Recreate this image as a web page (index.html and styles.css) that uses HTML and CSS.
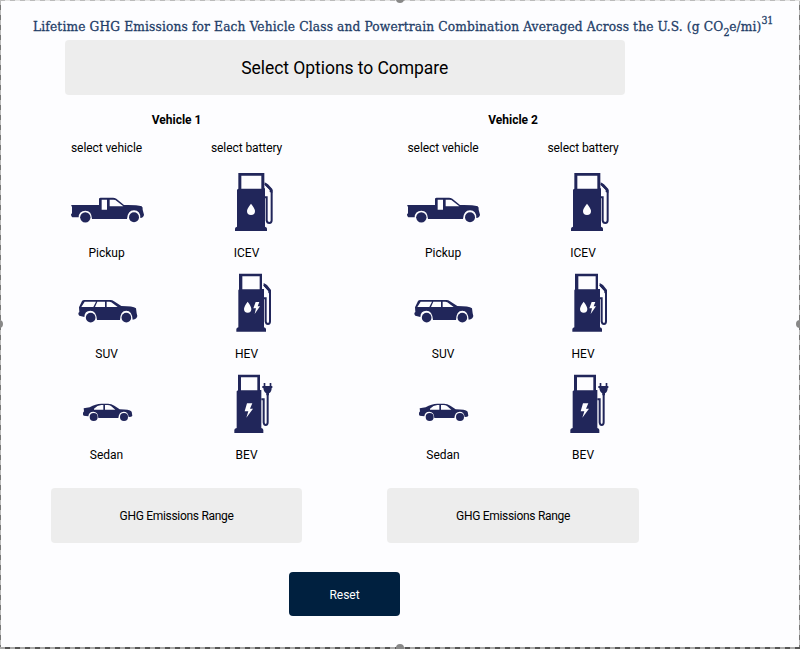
FILE: index.html
```
<!DOCTYPE html>
<html lang="en">
<head>
<meta charset="utf-8">
<title>Lifetime GHG Emissions</title>
<link rel="stylesheet" href="styles.css">
</head>
<body>
<svg class="defs" aria-hidden="true">
  <symbol id="pickup" viewBox="-12 0 300 225">
    <path fill-rule="evenodd" d="M31 120H114V102Q114 98 119 98H156Q161 98 166 101L189 120Q226 119 242 124Q246 126 245 134L249 149Q248 157 238 159Q238 136 219 136Q200 136 198 162H93Q92 137 73 137Q54 137 53 157H34Q30 156 30 148L33 145V125L31 123ZM122 104V134H138V104ZM146 104V124H187L163 105Q160 104 157 104Z"/>
    <circle cx="73" cy="157" r="15.5"/><circle cx="219" cy="157" r="15"/>
  </symbol>
  <symbol id="suv" viewBox="-12 -12 300 225">
    <path fill-rule="evenodd" d="M54 112L63 93Q65 90 70 90H148Q154 90 159 94L181 108Q216 108 225 115L227 130L229 138Q228 147 215 149Q213 122 196 122Q178 122 177 150H108Q106 122 88 122Q71 122 70 141L55 137Q52 135 52 129L55 126ZM71 95L61 111H97L105 95ZM109 95L102 111H132V95ZM137 95V111H170L151 97Q148 95 145 95Z"/>
    <circle cx="89" cy="143" r="14.5"/><circle cx="196" cy="143" r="14.5"/>
  </symbol>
  <symbol id="sedan" viewBox="-12 -39 300 225">
    <path fill-rule="evenodd" d="M68 85L86 82Q104 71 121 71H141Q151 71 160 77L176 88Q205 88 212 95L214 107Q213 111 203 111Q201 95 188 95Q174 95 172 114H112Q111 95 97 95Q83 95 82 109L68 107Q65 104 66 98L69 94ZM99 86V89H127V75H121Q109 76 99 86ZM132 75V89H163L150 78Q146 75 140 75Z"/>
    <circle cx="98" cy="111" r="12"/><circle cx="189" cy="111" r="12"/>
  </symbol>
  <symbol id="pump" viewBox="-72 0 300 225">
    <path fill-rule="evenodd" d="M52 24H130V70H132V185Q138 186 138 191V198H42V191Q42 186 48 185V74L52 71ZM61 32V71H121V32Z"/>
  </symbol>
  <symbol id="hose" viewBox="-72 0 300 225">
    <path class="hose-line" d="M132 97H137V166Q138 174 145 174Q152 174 152 166V76L132 56"/>
    <path d="M131 52L141 58L154 72V84L146 81V75L131 60Z"/>
  </symbol>
  <symbol id="icev" viewBox="-72 0 300 225">
    <use href="#pump" x="-72" width="300" height="225"/><use href="#hose" x="-72" width="300" height="225"/>
    <path class="cut" d="M90 116Q78 131 78 138A12 12 0 0 0 102 138Q102 131 90 116Z"/>
  </symbol>
  <symbol id="hev" viewBox="-72 0 300 225">
    <g transform="translate(1 -1)"><path fill-rule="evenodd" d="M53 24H122V70H128V185Q134 186 134 191V198H45V191Q45 186 51 185V74L53 71ZM63 32V71H115V32Z"/></g>
    <path class="hose-line" d="M129 97H134V166Q135 174 141 174Q147 174 147 166V76L129 56"/>
    <path d="M128 51L138 57L150 72V84L142 81V75L128 60Z"/>
    <path class="cut" d="M80 107Q69 121 69 129A11 11 0 0 0 91 129Q91 121 80 107ZM104 108H115L110 121H117L101 144L105 127H97Z"/>
  </symbol>
  <symbol id="bev" viewBox="-72 3 300 225">
    <path fill-rule="evenodd" d="M51 26H117V72H121V186Q127 187 127 192V201H40V192Q40 187 47 186V76L51 73ZM60 34V73H109V34Z"/>
    <path class="hose-line" d="M121 100H128V169Q129 177 134 177Q140 177 140 169V80"/>
    <path d="M128 51H133V60H146V51H151V60H154V66H152Q152 78 144 82V88H136V82Q128 78 127 66H124V60H128Z"/>
    <path class="cut" d="M78 112H94L87 128H96L76 155L82 136H71Z"/>
  </symbol>
</svg>
<main class="frame">
  <i class="handle top"></i><i class="handle bottom"></i><i class="handle left"></i><i class="handle right"></i>
  <h1>Lifetime GHG Emissions for Each Vehicle Class and Powertrain Combination Averaged Across the U.S. (g CO<sub>2</sub>e/mi)<sup>31</sup></h1>
  <div class="banner">Select Options to Compare</div>
  <div class="groups">
    <section class="group">
      <h2>Vehicle 1</h2>
      <div class="options">
        <p>select vehicle</p><p>select battery</p>
        <div class="option"><svg><use href="#pickup"/></svg>Pickup</div>
        <div class="option"><svg><use href="#icev"/></svg>ICEV</div>
        <div class="option"><svg><use href="#suv"/></svg>SUV</div>
        <div class="option"><svg><use href="#hev"/></svg>HEV</div>
        <div class="option"><svg><use href="#sedan"/></svg>Sedan</div>
        <div class="option"><svg><use href="#bev"/></svg>BEV</div>
      </div>
      <div class="range">GHG Emissions Range</div>
    </section>
    <section class="group">
      <h2>Vehicle 2</h2>
      <div class="options">
        <p>select vehicle</p><p>select battery</p>
        <div class="option"><svg><use href="#pickup"/></svg>Pickup</div>
        <div class="option"><svg><use href="#icev"/></svg>ICEV</div>
        <div class="option"><svg><use href="#suv"/></svg>SUV</div>
        <div class="option"><svg><use href="#hev"/></svg>HEV</div>
        <div class="option"><svg><use href="#sedan"/></svg>Sedan</div>
        <div class="option"><svg><use href="#bev"/></svg>BEV</div>
      </div>
      <div class="range">GHG Emissions Range</div>
    </section>
  </div>
  <button class="reset">Reset</button>
</main>
</body>
</html>
```
FILE: styles.css
```
* { box-sizing: border-box; }
body { margin: 0; }
.defs { display: none; }
.frame {
  position: relative;
  height: 649px;
  overflow: hidden;
  padding-top: 12px;
  color: #000;
  font: 12px/20px Roboto, sans-serif;
  background:
    repeating-linear-gradient(90deg, #bbb 0 5px, #e4e4e4 5px 10px) 0 0 / 100% 1px no-repeat,
    repeating-linear-gradient(90deg, #aaa 0 5px, #555 5px 10px) 0 100% / 100% 2px no-repeat,
    repeating-linear-gradient(#bbb 0 5px, #777 5px 10px) 0 0 / 1px 100% no-repeat,
    repeating-linear-gradient(#bbb 0 5px, #777 5px 10px) 100% 0 / 1px 100% no-repeat,
    #fdfdff;
}
.handle { position: absolute; width: 8px; height: 8px; border-radius: 50%; background: #888; }
.top { left: 396px; top: -5px; }
.bottom { left: 396px; bottom: -3px; }
.left { left: -5px; top: 320px; }
.right { right: -4px; top: 320px; }
h1 {
  margin: 0 0 0 33px;
  height: 28px;
  color: #1f3d68;
  font: 500 13.6px/29px "DejaVu Serif Condensed", "DejaVu Serif", serif;
  font-stretch: condensed;
  letter-spacing: .14px;
  -webkit-text-stroke: .3px #1f3d68;
  white-space: nowrap;
}
sub, sup { font-size: 10.5px; line-height: 0; letter-spacing: -.3px; }
sub { vertical-align: -5px; }
sup { vertical-align: 7px; }
.banner, .range { display: flex; align-items: center; justify-content: center; background: #ededed; border-radius: 4px; height: 55px; }
.banner { width: 559.5px; margin-left: 65px; font-size: 17.5px; letter-spacing: -.05px; }
.groups { display: flex; gap: 85px; margin-left: 50.8px; padding-top: 15px; }
.group { width: 251.5px; }
h2 { margin: 0; font-size: 12px; line-height: 20px; font-weight: 700; text-align: center; }
.options { display: grid; grid-template-columns: 140px 140px; justify-content: center; padding-top: 7px; text-align: center; }
.options p { margin: 0; height: 28px; line-height: 23px; letter-spacing: -.08px; }
.option { height: 101px; line-height: 27px; }
.option svg { display: block; width: 100px; height: 75px; margin: 0 auto; fill: #21265a; }
.hose-line { fill: none; stroke: #21265a; stroke-width: 6px; }
.cut { fill: #fdfdff; }
.range { margin-top: 20px; letter-spacing: -.3px; padding-top: 1px; }
.reset { display: block; width: 111px; height: 44px; margin: 29px 0 0 289px; padding: 1px 0 0; border: 0; border-radius: 4px; background: #00203f; color: #fff; font: inherit; }
```
